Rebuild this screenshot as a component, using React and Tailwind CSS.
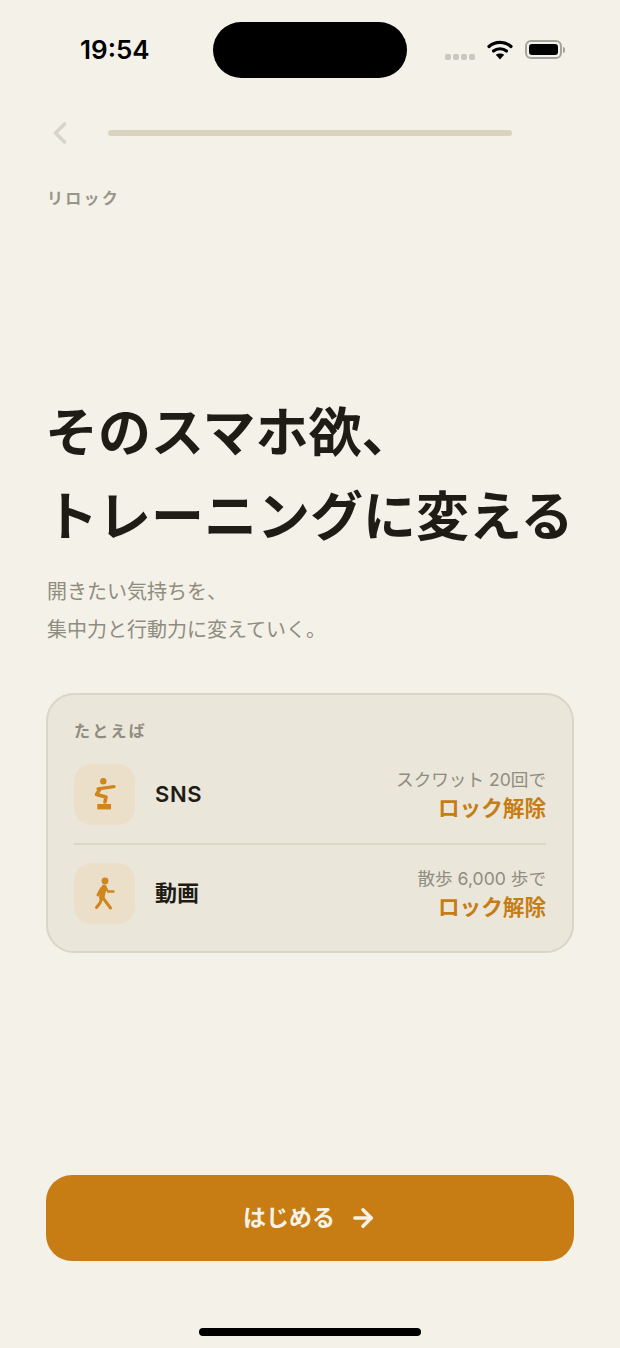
import { ArrowRight, ChevronLeft } from 'lucide-react'

const FONT = "font-['Inter','Noto_Sans_CJK_JP',sans-serif]"

function SquatIcon() {
  return (
    <svg width="40" height="45" viewBox="0 0 40 45" fill="none" className="text-[#cf861c]">
      <circle cx="18.3" cy="9.3" r="3.2" fill="currentColor" />
      <path d="M13 16.8 L29 14.6" stroke="currentColor" strokeWidth="3.2" strokeLinecap="round" />
      <path d="M15 17 L11.5 22.5 L21 25 L20 30" stroke="currentColor" strokeWidth="3.6" strokeLinejoin="round" strokeLinecap="round" />
      <rect x="12.3" y="32" width="13.7" height="5.4" fill="currentColor" />
    </svg>
  )
}

function WalkIcon() {
  return (
    <svg width="40" height="45" viewBox="0 0 40 45" fill="none" className="text-[#cf861c]">
      <circle cx="20" cy="10" r="3.4" fill="currentColor" />
      <path d="M19 16.5 L16.8 26.5" stroke="currentColor" strokeWidth="5.4" strokeLinecap="round" />
      <path d="M16.5 17.5 L13 24" stroke="currentColor" strokeWidth="3" strokeLinecap="round" />
      <path d="M21 17 L23 20.5 L28.5 20.5" stroke="currentColor" strokeWidth="2.4" strokeLinejoin="round" strokeLinecap="round" />
      <path d="M16.5 28 L15 32 L11.5 36.5" stroke="currentColor" strokeWidth="3" strokeLinejoin="round" strokeLinecap="round" />
      <path d="M18 27 L21 31 L25.5 37" stroke="currentColor" strokeWidth="3" strokeLinejoin="round" strokeLinecap="round" />
    </svg>
  )
}

function Row({ icon, name, nameClass, detail }) {
  return (
    <div className="flex items-center">
      <div className="w-[61px] h-[61px] rounded-[18px] bg-[#ecdfca] flex items-center justify-center">
        {icon}
      </div>
      <span className={`ml-[20px] text-[22px] font-semibold text-[#1f1c16] ${nameClass}`}>{name}</span>
      <div className="ml-auto text-right -mt-[4px]">
        <div className="text-[17.6px] leading-[30px] text-[#8f8c80]">{detail}</div>
        <div className="text-[21.6px] leading-[26px] font-bold text-[#c77d14]">ロック解除</div>
      </div>
    </div>
  )
}

export default function App() {
  return (
    <div className={`${FONT} w-[620px] h-[1348px] bg-[#f4f1e8] flex flex-col overflow-hidden`}>

      {/* Status bar */}
      <div className="flex items-center h-[56px] mt-[22px]">
        <span className="ml-[80px] w-[133px] text-[26px] font-semibold text-black leading-none">19:54</span>
        <div className="w-[194px] h-[56px] rounded-full bg-black" />
        <div className="ml-[38px] flex items-center -mt-[1px]">
          <div className="flex gap-[2px] mt-[15px]">
            <span className="w-[6px] h-[6px] rounded-[2px] bg-[#c9c7bf]" />
            <span className="w-[6px] h-[6px] rounded-[2px] bg-[#c9c7bf]" />
            <span className="w-[6px] h-[6px] rounded-[2px] bg-[#c9c7bf]" />
            <span className="w-[6px] h-[6px] rounded-[2px] bg-[#c9c7bf]" />
          </div>
          <svg className="ml-[12px]" width="26" height="20" viewBox="0 0 26 20" fill="none">
            <path d="M2 6.5 C8 1 18 1 24 6.5" stroke="black" strokeWidth="3.2" strokeLinecap="round" />
            <path d="M6.5 11 C10 8 16 8 19.5 11" stroke="black" strokeWidth="3.2" strokeLinecap="round" />
            <path d="M13 19.5 L8.8 14.8 C11 12.9 15 12.9 17.2 14.8 Z" fill="black" />
          </svg>
          <div className="ml-[12px] w-[37px] h-[19px] rounded-[6px] border-2 border-[#a5a39c] p-[2px]">
            <div className="w-full h-full rounded-[3px] bg-black" />
          </div>
          <span className="ml-[1px] w-[2px] h-[6px] rounded-r-full bg-[#a5a39c]" />
        </div>
      </div>

      {/* Nav */}
      <div className="flex items-center mt-[38px] h-[34px] pl-[42px]">
        <ChevronLeft size={36} strokeWidth={2.4} className="text-[#d8d5c8]" />
        <div className="ml-[30px] w-[404px] h-[6px] rounded-full bg-[#d8d4c0]" />
      </div>

      <div className="px-[46px] flex flex-col flex-1">
        <div className="mt-[36px] ml-[1px] text-[16px] leading-[24px] font-bold tracking-[0.14em] text-[#999688]">リロック</div>

        <h1 className="mt-[181px] -ml-[1px] text-[53px] leading-[84px] font-bold text-[#1f1c16] whitespace-nowrap">
          そのスマホ欲、<br />トレーニングに変える
        </h1>

        <p className="mt-[14px] ml-[1px] text-[20px] leading-[38px] text-[#8f8c80]">
          開きたい気持ちを、<br />集中力と行動力に変えていく。
        </p>

        {/* Example card */}
        <div className="mt-[44px] h-[260px] rounded-[28px] border-2 border-[#d9d6c6] bg-[#eae6da] px-[26px] pt-[24px]">
          <div className="text-[16px] leading-[24px] font-bold tracking-[0.14em] text-[#8f8c80]">たとえば</div>
          <div className="mt-[21px]">
            <Row icon={<SquatIcon />} name="SNS" nameClass="tracking-[0.03em]" detail="スクワット 20回で" />
          </div>
          <div className="my-[18px] h-[2px] bg-[#d9d6c6]" />
          <Row icon={<WalkIcon />} name="動画" nameClass="" detail="散歩 6,000 歩で" />
        </div>

        {/* CTA */}
        <button className="mt-auto h-[86px] rounded-[26px] bg-[#c77d14] flex items-center justify-center gap-[14px] text-[23px] font-semibold text-[#f8f3e6]">
          はじめる
          <ArrowRight size={28} strokeWidth={3} />
        </button>

        <div className="mt-[67px] mb-[12px] mx-auto w-[222px] h-[8px] rounded-full bg-black" />
      </div>
    </div>
  )
}
